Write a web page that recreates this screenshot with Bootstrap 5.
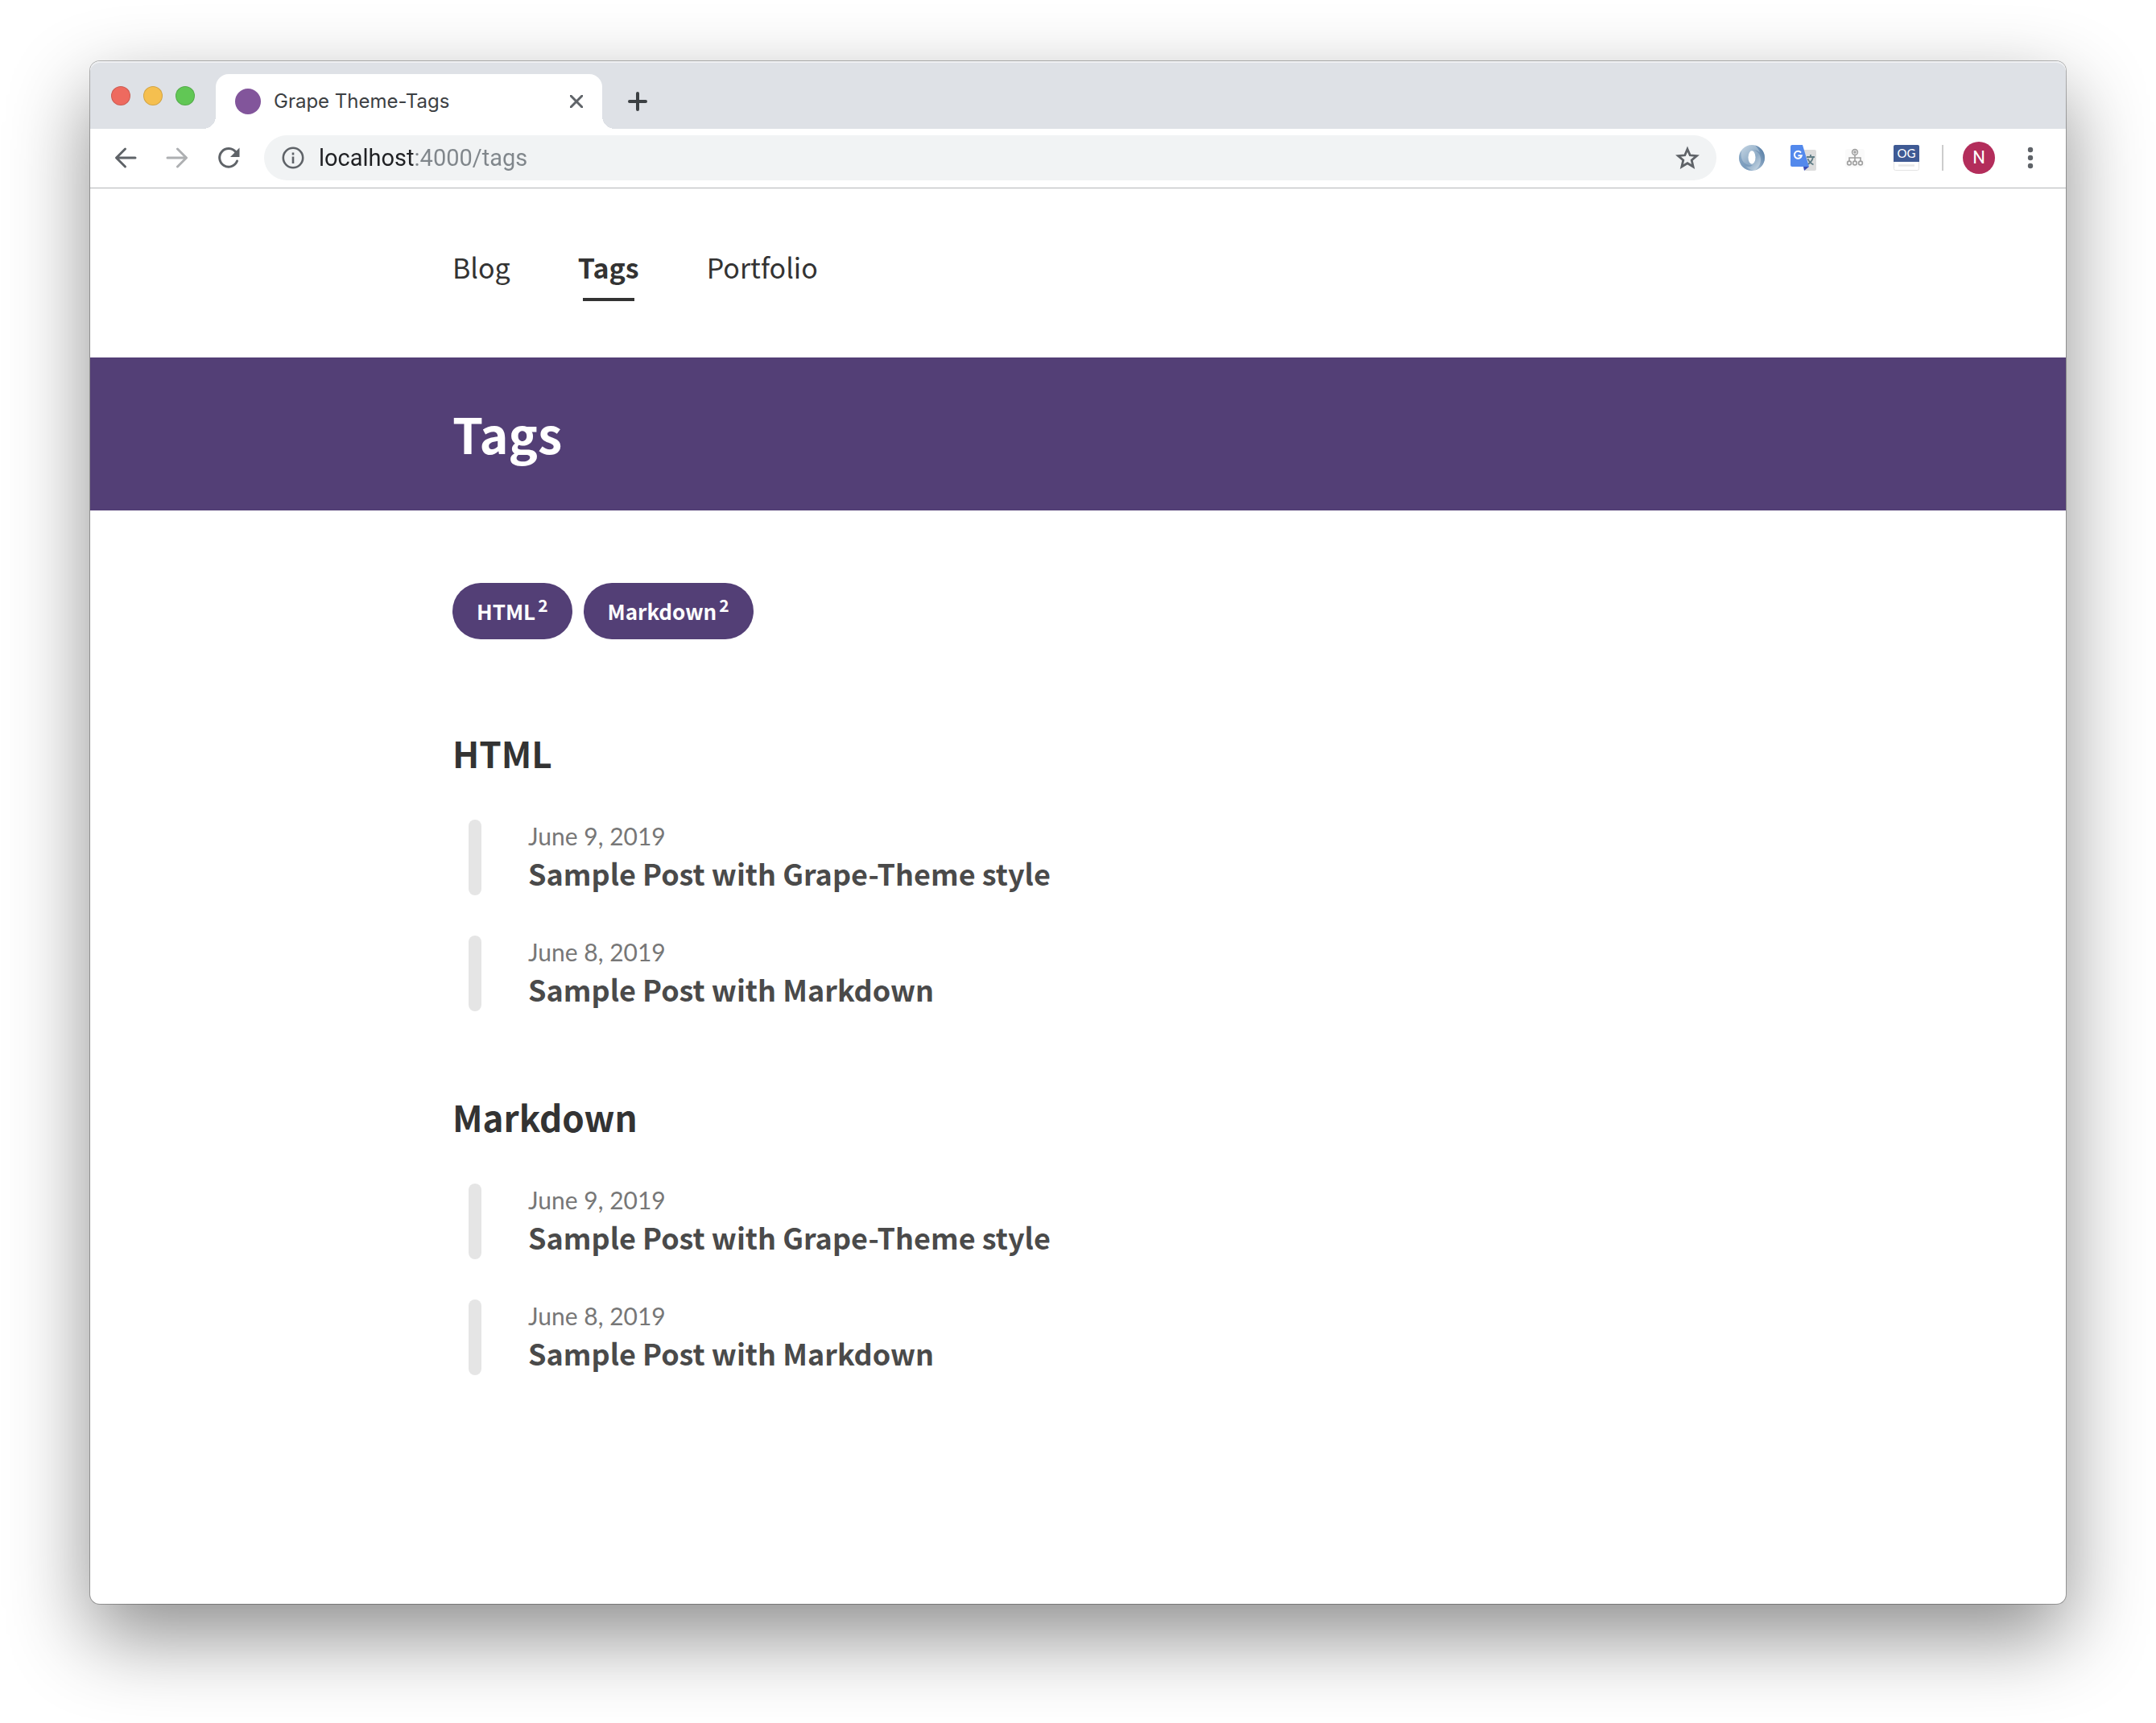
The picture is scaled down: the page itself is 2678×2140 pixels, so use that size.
<!DOCTYPE html>
<html lang="en">
<head>
<meta charset="utf-8">
<meta name="viewport" content="width=device-width, initial-scale=1">
<title>Grape Theme-Tags</title>
<link href="https://cdn.jsdelivr.net/npm/bootstrap@5.3.0/dist/css/bootstrap.min.css" rel="stylesheet">
<style>
:root{--grape:#533f76;--ink:#333;--chrome:#dee1e6;--icon:#5f6368}
body{background:#fff;padding:76px 112px 148px;font-family:"Noto Sans CJK KR","Noto Sans",sans-serif;color:var(--ink)}
svg{display:block;flex:none}
.browser{min-height:calc(100vh - 224px);border-radius:12px;background:#fff;box-shadow:0 0 0 1px rgba(0,0,0,.28),0 40px 100px rgba(0,0,0,.45)}
.tabstrip{height:84px;padding:16px 24px 0 26px;background:var(--chrome);border-radius:12px 12px 0 0;box-shadow:inset 0 2px 0 rgba(255,255,255,.5)}
.lights{gap:16px;margin-top:15px;margin-right:26px}
.light{width:24px;height:24px;border-radius:50%;border:1px solid rgba(0,0,0,.14);padding:0}
.light-red{background:#ee6a5f}.light-amber{background:#f5bf4f}.light-green{background:#61c755}
.tab{position:relative;width:480px;height:68px;padding:0 24px;background:#fff;border-radius:16px 16px 0 0;font-family:Inter,sans-serif;font-size:24px;line-height:32px;color:#3c4043}
.tab::before,.tab::after{content:"";position:absolute;bottom:0;width:16px;height:16px}
.tab::before{right:100%;background:radial-gradient(circle at 0 0,transparent 16px,#fff 16px)}
.tab::after{left:100%;background:radial-gradient(circle at 100% 0,transparent 16px,#fff 16px)}
.favicon{width:32px;height:32px;border-radius:50%;background:#82559b;margin-right:16px}
.icon-btn{border:0;background:none;padding:0;color:var(--icon)}
.new-tab{height:68px;margin-left:32px;color:#3c4043}
.toolbar{height:74px;padding:0 28px 2px;border-bottom:1px solid #b4b5b7;font-family:Roboto,sans-serif}
.nav-btns{gap:32px;margin-right:28px}
.omnibox{height:56px;padding:0 20px 0 22px;border-radius:28px;background:#f1f3f4;margin-right:28px}
.url{border:0;outline:0;padding:0;font-size:29px;line-height:40px;color:#202124;-webkit-text-fill-color:transparent;background:linear-gradient(90deg,#202124 119px,#80868b 119px);-webkit-background-clip:text;background-clip:text;margin-left:18px}
.exts{gap:32px}
.bar-line{width:2px;height:32px;background:#ccc;margin:0 24px 0 28px}
.avatar{width:40px;height:40px;border-radius:50%;background:#b32d5b;color:#fff;font-size:22px;line-height:40px;margin-right:28px}
.wrap{width:100%;max-width:1554px;margin:0 auto}
.site-head{padding:70px 0}
.site-nav{gap:84px}
.site-nav a{color:var(--ink);text-decoration:none;font-size:34px;line-height:56px}
.site-nav a.active{font-weight:700}
.site-nav a.active::after{content:"";display:block;width:64px;height:4px;margin:10px auto 0;background:var(--ink)}
.hero{background:var(--grape);color:#fff;padding:49px 0 51px}
.hero h1{font-size:61px;line-height:90px;font-weight:700;margin:0}
.content{padding:90px 0}
.tags{gap:14px}
.tag{height:70px;padding:0 30px;border-radius:35px;background:var(--grape);color:#fff;font-weight:700;font-size:26px;line-height:70px;text-decoration:none}
.tag sup{margin-left:3px;font-size:21px}
.group{margin-top:98px}
.tags + .group{margin-top:108px}
.group h2{font-size:44px;line-height:66px;font-weight:700;margin:0 0 50px}
.posts{gap:50px;padding-left:20px;margin:0}
.post{gap:58px}
.post::before{content:"";width:16px;border-radius:8px;background:#e5e5e5}
.post time{display:block;font-family:Lato,sans-serif;font-size:30px;line-height:40px;color:#777}
.post a{display:block;font-size:36px;line-height:52px;font-weight:700;color:#4a4a4a;text-decoration:none;padding-bottom:2px}
</style>
<script src="https://cdn.jsdelivr.net/npm/bootstrap@5.3.0/dist/js/bootstrap.bundle.min.js"></script>
</head>
<body>
<div class="browser d-flex flex-column">
  <div class="tabstrip d-flex align-items-start">
    <div class="lights d-flex">
      <button class="light light-red" aria-label="Close window"></button>
      <button class="light light-amber" aria-label="Minimize window"></button>
      <button class="light light-green" aria-label="Zoom window"></button>
    </div>
    <div class="tab d-flex align-items-center">
      <span class="favicon"></span>
      <span class="flex-grow-1">Grape Theme-Tags</span>
      <button class="icon-btn" aria-label="Close tab"><svg width="16" height="16" viewBox="0 0 16 16" stroke="currentColor" stroke-width="3" stroke-linecap="round"><path d="M1 1l14 14M15 1L1 15"/></svg></button>
    </div>
    <button class="icon-btn new-tab" aria-label="New tab"><svg width="24" height="24" viewBox="0 0 24 24" stroke="currentColor" stroke-width="4" stroke-linecap="round"><path d="M12 2v20M2 12h20"/></svg></button>
  </div>

  <div class="toolbar d-flex align-items-center">
    <div class="nav-btns d-flex">
      <button class="icon-btn" aria-label="Back"><svg width="32" height="32" viewBox="0 0 32 32" fill="none" stroke="currentColor" stroke-width="3" stroke-linecap="round" stroke-linejoin="round"><path d="M28 16H5M15.500 5L4.500 16l11 11"/></svg></button>
      <button class="icon-btn opacity-50" aria-label="Forward"><svg width="32" height="32" viewBox="0 0 32 32" fill="none" stroke="currentColor" stroke-width="3" stroke-linecap="round" stroke-linejoin="round"><path d="M4 16h23M16.500 5l11 11-11 11"/></svg></button>
      <button class="icon-btn" aria-label="Reload"><svg width="32" height="32" viewBox="0 0 32 32" fill="none" stroke="currentColor" stroke-width="3" stroke-linecap="round"><path d="M26.500 20A11.300 11.300 0 1 1 25 9"/><path d="M29.500 3.500V15H18z" fill="currentColor" stroke="none"/></svg></button>
    </div>
    <div class="omnibox d-flex align-items-center flex-grow-1">
      <svg width="28" height="28" viewBox="0 0 28 28" fill="none" stroke="#5f6368" stroke-width="2.600"><circle cx="14" cy="14" r="12.200"/><path d="M14 12.500v8.500M14 7.500v3"/></svg>
      <input class="url flex-grow-1" type="text" value="localhost:4000/tags" aria-label="Address">
      <button class="icon-btn" aria-label="Bookmark this page"><svg width="32" height="32" viewBox="0 0 32 32" fill="none" stroke="currentColor" stroke-width="2.800"><path d="M16 5.200l3.200 7.600 8.300.7-6.300 5.400 1.900 8.100L16 22.700 8.900 27l1.900-8.100-6.300-5.400 8.300-.7z"/></svg></button>
    </div>
    <div class="exts d-flex">
      <button class="icon-btn" aria-label="JSON viewer"><svg width="32" height="32" viewBox="0 0 32 32"><defs><linearGradient id="ja" x1="0" y1="0" x2="1" y2="1"><stop offset="0" stop-color="#c9d9e6"/><stop offset=".55" stop-color="#8eabc6"/><stop offset="1" stop-color="#dfe9f1"/></linearGradient><linearGradient id="jb" x1="1" y1="0" x2="0" y2="1"><stop offset="0" stop-color="#46709c"/><stop offset="1" stop-color="#c3d4e3"/></linearGradient></defs><circle cx="16" cy="16" r="16" fill="url(#ja)"/><path d="M20 .5C28 3 32 9 32 16c0 8-6 14-12 15.500C27 26 29 18 25 11c-2-3-6-5-10-4.500 4-1 8 0 11 3C25 6 23 3 20 .5z" fill="url(#jb)"/><path d="M3 7C1 17 5 26 17 25c-2 2-6 3-9 1 2 3 6 5 10 5.600C9 33 1 27 0 17 0 13 1 10 3 7z" fill="#6c91b5" opacity=".6"/><ellipse cx="16" cy="15.500" rx="4.500" ry="8.300" fill="#fff"/></svg></button>
      <button class="icon-btn" aria-label="Translate"><svg width="32" height="32" viewBox="0 0 32 32"><path d="M14 6h16a2 2 0 0 1 2 2v22a2 2 0 0 1-2 2H18z" fill="#dcdcdc"/><path d="M20 15h10M25 12v3M28 15c-1 5-4 8-8 10M21.500 17c1 3 4 6 7 7.500" fill="none" stroke="#607d86" stroke-width="1.800"/><path d="M16 27h7l-6 5z" fill="#3a4db5"/><path d="M2 0h13l8 27H2a2 2 0 0 1-2-2V2a2 2 0 0 1 2-2z" fill="#5389ec"/><path d="M13 9.600a4.500 4.500 0 1 0 .8 3.700H9.400" fill="none" stroke="#fff" stroke-width="2"/></svg></button>
      <button class="icon-btn" aria-label="Site map"><svg width="32" height="32" viewBox="0 0 32 32" fill="none" stroke="#a0a0a0" stroke-width="1.600"><rect x="4" y="5" width="24" height="23" rx="3" fill="#fafafa" stroke="none"/><circle cx="16" cy="9" r="3.400"/><circle cx="16" cy="9" r="1"/><circle cx="9" cy="22.500" r="2.400"/><circle cx="16" cy="22.500" r="2.400"/><circle cx="23" cy="22.500" r="2.400"/><path d="M16 12.500V20M9 20v-4h14v4"/></svg></button>
      <button class="icon-btn" aria-label="Open Graph preview"><svg width="32" height="32" viewBox="0 0 32 32"><rect x=".5" y=".5" width="31" height="31" rx="2" fill="#fff" stroke="#e3e3e3"/><path d="M2 0h28a2 2 0 0 1 2 2v19H0V2a2 2 0 0 1 2-2z" fill="#3f5a94"/><text x="16" y="16" text-anchor="middle" font-family="Lato, sans-serif" font-size="15" fill="#fff">OG</text><path d="M6 25.500h20" stroke="#e8e8e8" stroke-width="2.500"/></svg></button>
    </div>
    <span class="bar-line"></span>
    <button class="icon-btn avatar" aria-label="Profile N">N</button>
    <button class="icon-btn" aria-label="Menu"><svg width="32" height="32" viewBox="0 0 32 32" fill="currentColor"><circle cx="16" cy="6" r="3.200"/><circle cx="16" cy="16" r="3.200"/><circle cx="16" cy="26" r="3.200"/></svg></button>
  </div>

  <header class="site-head">
    <nav class="wrap site-nav d-flex align-items-start">
      <a href="#">Blog</a>
      <a href="#" class="active" aria-current="page">Tags</a>
      <a href="#">Portfolio</a>
    </nav>
  </header>
  <div class="hero"><div class="wrap"><h1>Tags</h1></div></div>
  <main class="content flex-grow-1">
    <div class="wrap">
      <div class="tags d-flex flex-wrap">
        <a class="tag" href="#html">HTML<sup>2</sup></a>
        <a class="tag" href="#markdown">Markdown<sup>2</sup></a>
      </div>
      <section class="group" id="html">
        <h2>HTML</h2>
        <ul class="posts list-unstyled d-flex flex-column">
          <li class="post d-flex"><div><time datetime="2019-06-09">June 9, 2019</time><a href="#">Sample Post with Grape-Theme style</a></div></li>
          <li class="post d-flex"><div><time datetime="2019-06-08">June 8, 2019</time><a href="#">Sample Post with Markdown</a></div></li>
        </ul>
      </section>
      <section class="group" id="markdown">
        <h2>Markdown</h2>
        <ul class="posts list-unstyled d-flex flex-column">
          <li class="post d-flex"><div><time datetime="2019-06-09">June 9, 2019</time><a href="#">Sample Post with Grape-Theme style</a></div></li>
          <li class="post d-flex"><div><time datetime="2019-06-08">June 8, 2019</time><a href="#">Sample Post with Markdown</a></div></li>
        </ul>
      </section>
    </div>
  </main>
</div>
</body>
</html>
